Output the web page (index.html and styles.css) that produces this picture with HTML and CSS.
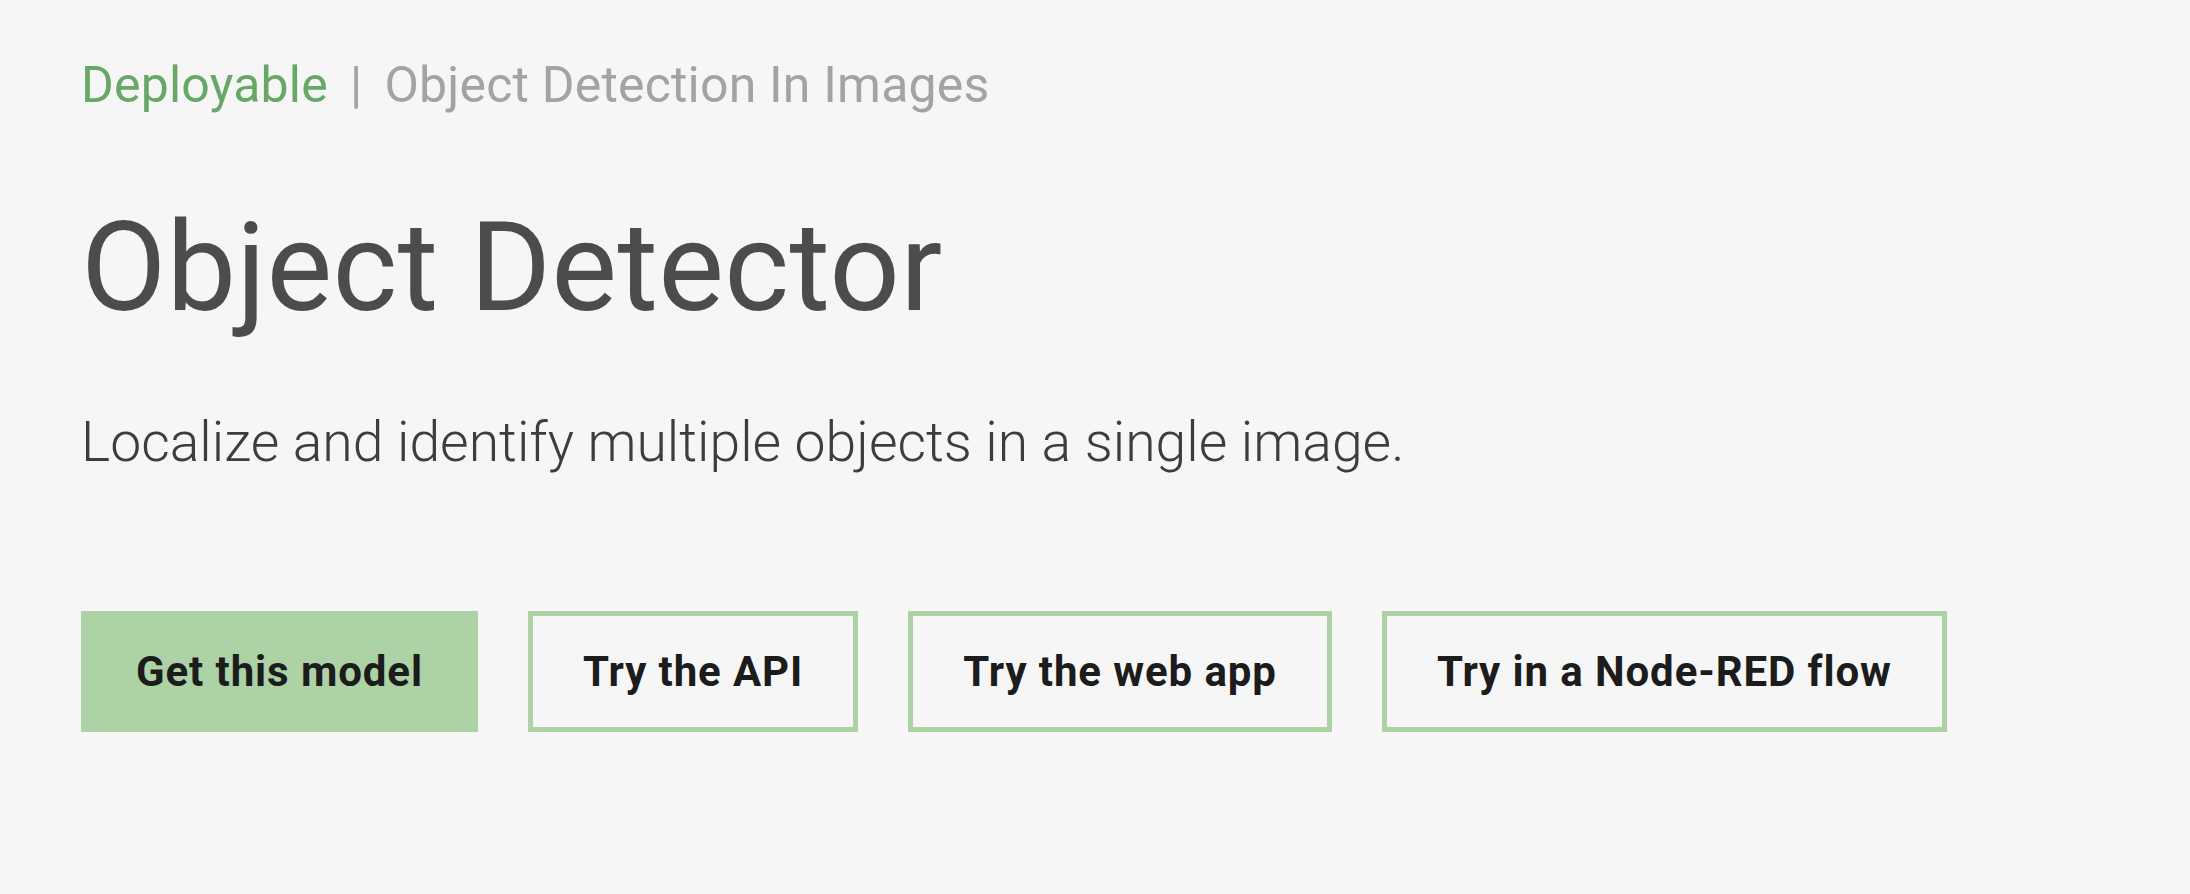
FILE: index.html
```html
<!DOCTYPE html>
<html lang="en">
<head>
<meta charset="utf-8">
<title>Object Detector</title>
<link rel="stylesheet" href="styles.css">
</head>
<body>
<main class="hero">
  <nav class="crumbs">
    <a class="crumb-link" href="#">Deployable</a>
    <span class="crumb-sep">|</span>
    <span class="crumb-current">Object Detection In Images</span>
  </nav>
  <h1 class="title">Object Detector</h1>
  <p class="lead">Localize and identify multiple objects in a single image.</p>
  <div class="actions">
    <a class="btn btn-primary" href="#">Get this model</a>
    <a class="btn btn-outline" href="#">Try the API</a>
    <a class="btn btn-outline" href="#">Try the web app</a>
    <a class="btn btn-outline" href="#">Try in a Node-RED flow</a>
  </div>
</main>
</body>
</html>
```
FILE: styles.css
```css
html, body {
  margin: 0;
  padding: 0;
  background: #f6f6f6;
}
body {
  font-family: Roboto, "Liberation Sans", sans-serif;
  width: 2190px;
  height: 894px;
  overflow: hidden;
}
.hero {
  padding: 55px 0 0 81px;
  display: flex;
  flex-direction: column;
  align-items: flex-start;
}
.crumbs {
  display: flex;
  align-items: center;
  font-size: 50px;
  line-height: 60px;
  height: 60px;
  letter-spacing: 0.2px;
}
.crumb-link {
  color: #68a866;
  text-decoration: none;
}
.crumb-sep {
  color: #a3a3a3;
  margin: 0 22px;
}
.crumb-current {
  color: #a3a3a3;
}
.title {
  margin: 83px 0 0 0;
  font-size: 124px;
  line-height: 140px;
  font-weight: 400;
  color: #4c4c4c;
  letter-spacing: 0.3px;
}
.lead {
  margin: 70px 0 0 0;
  font-size: 55.3px;
  line-height: 70px;
  font-weight: 300;
  color: #3d3d3d;
}
.actions {
  margin-top: 133px;
  display: flex;
  gap: 50px;
}
.btn {
  display: block;
  box-sizing: border-box;
  height: 121px;
  line-height: 111px;
  padding: 0 50px;
  border: 5px solid #acd2a6;
  font-size: 42px;
  font-weight: 700;
  letter-spacing: 0.9px;
  color: #1c1c1c;
  text-decoration: none;
  white-space: nowrap;
}
.btn-primary {
  background: #acd2a6;
}
.btn-outline {
  background: transparent;
}
```
